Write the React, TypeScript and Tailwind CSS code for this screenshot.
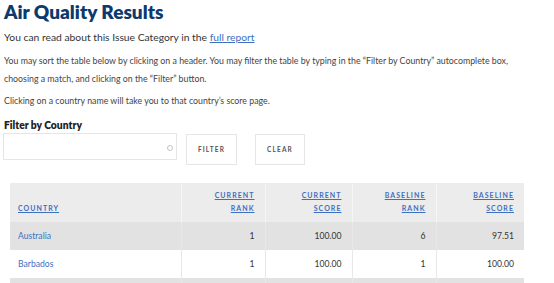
import React from 'react';

interface Row {
  country: string;
  currentRank: string;
  currentScore: string;
  baselineRank: string;
  baselineScore: string;
}

const rows: Row[] = [
  { country: 'Australia', currentRank: '1', currentScore: '100.00', baselineRank: '6', baselineScore: '97.51' },
  { country: 'Barbados', currentRank: '1', currentScore: '100.00', baselineRank: '1', baselineScore: '100.00' },
  { country: 'Belgium', currentRank: '1', currentScore: '100.00', baselineRank: '1', baselineScore: '100.00' },
];

const HeaderCell: React.FC<{ lines: string[]; left?: boolean; last?: boolean }> = ({ lines, left, last }) => (
  <th
    className={`align-bottom pb-[7px] pt-[6px] font-bold ${left ? 'text-left pl-2' : 'text-right pr-[10px]'} ${
      last ? '' : 'border-r border-[#f6f6f6]'
    }`}
  >
    <a className="text-[7px] leading-[13px] tracking-[0.15em] text-[#3f6fbf] underline uppercase">
      {lines.map((l, i) => (
        <span key={i} className="block">
          {l}
        </span>
      ))}
    </a>
  </th>
);

const App: React.FC = () => {
  return (
    <div className="w-[554px] h-[283px] overflow-hidden bg-white pl-1 font-['Lato',sans-serif] text-[#333]">
      <div className="w-[520px]">
        <h1 className="text-[19px] leading-[24px] font-extrabold text-[#0c3a6d]">Air Quality Results</h1>
        <p className="text-[10.3px] leading-[16px] mt-[5px] text-[#333]">
          You can read about this Issue Category in the{' '}
          <a className="text-[#3f6fbf] underline">full report</a>
        </p>
        <p className="text-[8.8px] leading-[18px] mt-[7px] text-[#444]">
          You may sort the table below by clicking on a header. You may filter the table by typing in the “Filter by
          Country” autocomplete box, choosing a match, and clicking on the “Filter” button.
        </p>
        <p className="text-[8.8px] leading-[18px] mt-[4px] text-[#444]">
          Clicking on a country name will take you to that country’s score page.
        </p>

        <div className="mt-[8px]">
          <label className="block text-[10.3px] font-extrabold text-[#222] leading-[14px]">Filter by Country</label>
          <div className="flex items-start mt-[1px] -ml-px">
            <div className="relative w-[174px] h-[27px] border border-[#e6e6e6] bg-white">
              <span className="absolute right-[3px] top-[11px] w-[6px] h-[6px] rounded-full border border-[#c4c4c4]" />
            </div>
            <button className="ml-[9px] mt-px w-[51px] h-[31px] border border-[#e6e6e6] text-[6.5px] font-bold tracking-[0.18em] text-[#555]">
              FILTER
            </button>
            <button className="ml-[18px] mt-px w-[50px] h-[31px] border border-[#e6e6e6] text-[6.5px] font-bold tracking-[0.18em] text-[#555]">
              CLEAR
            </button>
          </div>
        </div>

        <table className="mt-[18px] ml-[6px] w-[514px] border-collapse table-fixed">
          <colgroup>
            <col className="w-[171px]" />
            <col className="w-[84px]" />
            <col className="w-[87px]" />
            <col className="w-[84px]" />
            <col className="w-[88px]" />
          </colgroup>
          <thead>
            <tr className="bg-[#ececec] h-[39px]">
              <HeaderCell lines={['Country']} left />
              <HeaderCell lines={['Current', 'Rank']} />
              <HeaderCell lines={['Current', 'Score']} />
              <HeaderCell lines={['Baseline', 'Rank']} />
              <HeaderCell lines={['Baseline', 'Score']} last />
            </tr>
          </thead>
          <tbody>
            {rows.map((r, i) => (
              <tr key={r.country} className={`h-[28px] text-[8.6px] ${i % 2 === 0 ? 'bg-[#e2e2e2]' : 'bg-white'}`}>
                <td className="pl-2 text-[#3f6fbf] border-r border-[#e8e8e8]">{r.country}</td>
                <td className="pr-[10px] text-right border-r border-[#e8e8e8]">{r.currentRank}</td>
                <td className="pr-[10px] text-right border-r border-[#e8e8e8]">{r.currentScore}</td>
                <td className="pr-[10px] text-right border-r border-[#e8e8e8]">{r.baselineRank}</td>
                <td className="pr-[10px] text-right">{r.baselineScore}</td>
              </tr>
            ))}
          </tbody>
        </table>
      </div>
    </div>
  );
};

export default App;
